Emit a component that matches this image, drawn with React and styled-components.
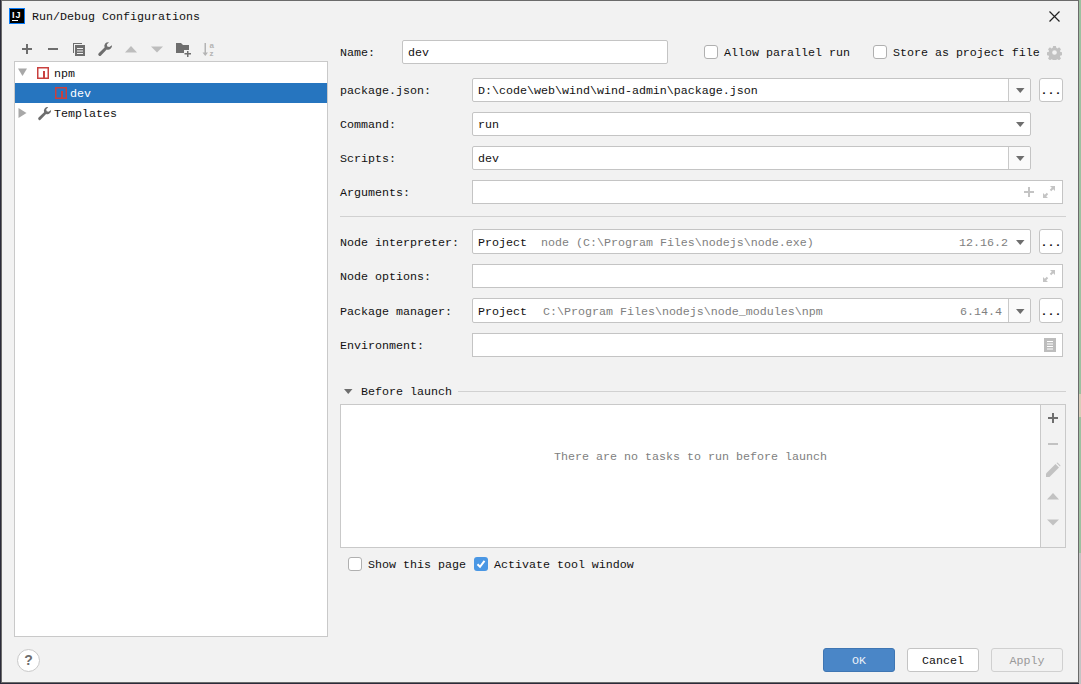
import React from "react";
import styled, { createGlobalStyle } from "styled-components";

const GlobalStyle = createGlobalStyle`
  html, body {
    margin: 0;
    padding: 0;
    background: #f2f2f2;
  }
  * {
    box-sizing: border-box;
  }
`;

const TriangleIcon = ({ dir = "down", color = "#6e6e6e", size = 16 }) => {
  const points = {
    down: "4,6 12.500,6 8.250,11",
    up: "4,11 12.500,11 8.250,6",
    downWide: "2,5.500 14,5.500 8,11.500",
    upWide: "2,11.500 14,11.500 8,5",
    downTall: "3,3.500 12,3.500 7.500,11",
    right: "3.500,3 3.500,13 11.500,8",
  };
  return (
    <svg width={size} height={size} viewBox="0 0 16 16">
      <polygon points={points[dir]} fill={color} />
    </svg>
  );
};

const PlusIcon = ({ color = "#6e6e6e" }) => (
  <svg width="16" height="16" viewBox="0 0 16 16">
    <path d="M3 7h4V3h2v4h4v2H9v4H7V9H3z" fill={color} />
  </svg>
);

const MinusIcon = ({ color = "#6e6e6e" }) => (
  <svg width="16" height="16" viewBox="0 0 16 16">
    <rect x="3" y="7" width="10" height="2" fill={color} />
  </svg>
);

const CopyIcon = () => (
  <svg width="16" height="16" viewBox="0 0 16 16">
    <path d="M2 2h9v1H3v9H2z" fill="#6e6e6e" />
    <path
      d="M4 4h10v11H4zM6 7v1h6V7zM6 9.500v1h6v-1zM6 12v1h6v-1z"
      fill="#6e6e6e"
      fillRule="evenodd"
    />
  </svg>
);

const WrenchIcon = ({ size = 16 }) => (
  <svg width={size} height={size} viewBox="0 0 16 16">
    <path
      d="M15 4.200a4 4 0 0 1-5.300 4.300L4 14.500a1.500 1.500 0 0 1-2.300-2.200l5.900-5.700A4 4 0 0 1 12 1.200L9.800 3.500l.5 2 2 .6z"
      fill="#6e6e6e"
    />
  </svg>
);

const FolderPlusIcon = () => (
  <svg width="16" height="16" viewBox="0 0 16 16">
    <path d="M1 2h5l2 2h6v5H9v3H1z" fill="#6e6e6e" />
    <path d="M12 10h1.500v2H16v1.500h-2.500V16H12v-2.500H9.500V12H12z" fill="#6e6e6e" />
  </svg>
);

const SortIcon = () => (
  <svg width="16" height="16" viewBox="0 0 16 16">
    <path d="M3.500 2H5v9.500h2L4.250 15 1.500 11.500h2z" fill="#b4b4b4" />
    <text
      x="8.500"
      y="7"
      fontSize="8"
      fontWeight="bold"
      fontFamily="Liberation Sans, sans-serif"
      fill="#b4b4b4"
    >
      a
    </text>
    <text
      x="8.500"
      y="15"
      fontSize="8"
      fontWeight="bold"
      fontFamily="Liberation Sans, sans-serif"
      fill="#b4b4b4"
    >
      z
    </text>
  </svg>
);

const NpmIcon = () => (
  <svg width="12" height="12" viewBox="0 0 12 12">
    <rect x="0.750" y="0.750" width="10.500" height="10.500" fill="#fff" stroke="#c9403e" strokeWidth="1.500" />
    <rect x="6" y="4" width="2" height="7" fill="#c9403e" />
  </svg>
);

const NpmSelectedIcon = () => (
  <svg width="12" height="12" viewBox="0 0 12 12">
    <rect x="0.750" y="0.750" width="10.500" height="10.500" fill="#2675bf" stroke="#c9403e" strokeWidth="1.500" />
    <rect x="6" y="4" width="2" height="7" fill="#c9403e" />
  </svg>
);

const GearIcon = () => (
  <svg width="15" height="15" viewBox="0 0 16 16">
    <path
      fillRule="evenodd"
      d="M6.500 1h3l.4 2 1.300.6 1.700-1.100 2 2.100-1.100 1.700.6 1.200 2 .4v3l-2 .4-.6 1.300 1.100 1.700-2 2-1.700-1.100-1.300.6-.4 2h-3l-.4-2-1.300-.6-1.700 1.100-2-2 1.100-1.700-.6-1.300-2-.4v-3l2-.4.6-1.200-1.100-1.700 2-2.100 1.700 1.100 1.300-.6zM8 5.500a2.500 2.500 0 1 0 0 5 2.500 2.500 0 0 0 0-5z"
      fill="#c2c2c2"
    />
  </svg>
);

const ExpandIcon = () => (
  <svg width="14" height="14" viewBox="0 0 14 14">
    <path d="M8 1h5v5l-1.800-1.800-2 2-1.400-1.400 2-2z" fill="#c4c4c4" />
    <path d="M6 13H1V8l1.800 1.800 2-2 1.400 1.400-2 2z" fill="#c4c4c4" />
  </svg>
);

const NoteIcon = () => (
  <svg width="12" height="14" viewBox="0 0 12 14">
    <path
      fillRule="evenodd"
      d="M0 0h12v14H0zM3 3v1h6V3zM3 5.500v1h6v-1zM3 8v1h6V8zM3 10.500v1h6v-1z"
      fill="#bdbdbd"
    />
  </svg>
);

const PencilIcon = () => (
  <svg width="16" height="16" viewBox="0 0 16 16">
    <path d="M1 15v-3.500L10.500 2l3.500 3.500L4.500 15z" fill="#c2c2c2" />
    <path d="M11.500 1l1-.5 3 3-.5 1z" fill="#c2c2c2" />
  </svg>
);

const CheckIcon = () => (
  <svg width="14" height="14" viewBox="0 0 14 14">
    <path d="M3.500 7.200l2.500 2.600 4.500-6" fill="none" stroke="#fff" strokeWidth="2" />
  </svg>
);

const CloseIcon = () => (
  <svg width="11" height="11" viewBox="0 0 11 11">
    <path d="M.5.500l10 10M10.500.500l-10 10" stroke="#222" strokeWidth="1.200" fill="none" />
  </svg>
);

const Backdrop = styled.div`
  width: 1081px;
  height: 684px;
  padding: 0 2px 1px 1px;
  overflow: hidden;
  font-family: "Liberation Mono", "Courier New", monospace;
  font-size: 11.67px;
  line-height: 15px;
  color: #111;
  background: linear-gradient(
      180deg,
      #9dc0a0 0,
      #9dc0a0 394px,
      #d8cdb8 394px,
      #d8cdb8 417px,
      #9dc0a0 417px,
      #9dc0a0 553px,
      #c4c4c4 553px
    )
    right top / 2px 100% no-repeat,
    #2b2b3a;
`;

const Window = styled.div`
  width: 100%;
  height: 100%;
  display: flex;
  flex-direction: column;
  background: #f2f2f2;
  border: 1px solid #6b6b6b;
`;

const TitleBar = styled.div`
  height: 30px;
  flex-shrink: 0;
  display: flex;
  align-items: center;
  padding: 0 18px 0 7px;
`;

const Logo = styled.div`
  width: 16px;
  height: 16px;
  margin-right: 7px;
  background: #000;
  border: 1px solid #087cfa;
  display: flex;
`;

// every text piece sits 1px below the centre of its row, hence the 2px on top
const TextLine = styled.span`
  padding-top: 2px;
  white-space: pre;
`;

const Title = styled(TextLine)`
  flex: 1;
`;

const Content = styled.div`
  flex: 1;
  min-height: 0;
  display: flex;
  gap: 12px;
  padding: 0 12px;
`;

const LeftPane = styled.div`
  width: 314px;
  display: flex;
  flex-direction: column;
`;

const Toolbar = styled.div`
  height: 30px;
  display: flex;
  align-items: center;
  gap: 10px;
  padding: 6px 0 0 5px;
`;

const ToolButton = styled.div`
  width: 16px;
  height: 16px;
  display: flex;
`;

const Tree = styled.div`
  flex: 1;
  padding-top: 1px;
  background: #fff;
  border: 1px solid #c9c9c9;
`;

const TreeRow = styled.div`
  height: 20px;
  display: flex;
  align-items: center;
  padding-left: ${(props) => props.$indent}px;
  background: ${(props) => (props.$selected ? "#2675bf" : "transparent")};
  color: ${(props) => (props.$selected ? "#fff" : "#111")};
`;

const TreeArrow = styled.div`
  width: 16px;
  height: 16px;
  margin-right: 6px;
  display: flex;
`;

const TreeIcon = styled.div`
  width: ${(props) => props.$width}px;
  margin-right: ${(props) => props.$gap}px;
  display: flex;
  align-items: center;
`;

const RightPane = styled.div`
  width: 726px;
  padding-top: 9px;
  display: flex;
  flex-direction: column;
`;

const Row = styled.div`
  height: ${(props) => props.$height || 24}px;
  margin-bottom: ${(props) => props.$gap || 10}px;
  display: flex;
  align-items: center;
  flex-shrink: 0;
`;

const Label = styled(TextLine)`
  width: ${(props) => props.$width || 132}px;
  padding-top: ${(props) => (props.$tall ? 4 : 2)}px;
  flex-shrink: 0;
`;

const Field = styled.div`
  width: ${(props) => props.$width}px;
  height: 100%;
  flex-shrink: 0;
  display: flex;
  align-items: center;
  padding-left: 5px;
  background: #fff;
  border: 1px solid #c4c4c4;
  border-radius: ${(props) => (props.$round ? "2px" : "0")};
`;

const FieldText = styled(TextLine)`
  flex: 1;
`;

const Muted = styled.span`
  color: #808080;
  margin-left: ${(props) => props.$gap || 0}px;
`;

const Version = styled.span`
  margin-left: auto;
  padding-right: ${(props) => props.$pad}px;
  color: #808080;
`;

const ComboInfo = styled.div`
  flex: 1;
  padding-top: 4px;
  display: flex;
  align-items: center;
  white-space: pre;
`;

const ArrowZone = styled.div`
  width: 22px;
  height: 100%;
  flex-shrink: 0;
  display: flex;
  align-items: center;
  justify-content: center;
  background: ${(props) => (props.$divided ? "#fafafa" : "transparent")};
  border-left: 1px solid ${(props) => (props.$divided ? "#c9c9c9" : "transparent")};
  border-radius: 0 2px 2px 0;
`;

const FieldIcons = styled.div`
  display: flex;
  align-items: center;
  gap: 7px;
  padding-right: 6px;
`;

const EllipsisButton = styled.button`
  width: 24px;
  height: 100%;
  margin-left: 8px;
  padding: 3px 0 0;
  flex-shrink: 0;
  background: #fff;
  border: 1px solid #c4c4c4;
  border-radius: 3px;
  font: inherit;
  font-weight: bold;
  color: #111;
`;

const CheckGroup = styled.div`
  display: flex;
  align-items: center;
  margin-left: ${(props) => props.$left}px;
`;

const CheckBox = styled.div`
  width: 14px;
  height: 14px;
  margin-right: 6px;
  flex-shrink: 0;
  display: flex;
  background: ${(props) => (props.$checked ? "#4a97e4" : "#fff")};
  border: ${(props) => (props.$checked ? "none" : "1px solid #b0b0b0")};
  border-radius: 3px;
`;

const Gear = styled.div`
  margin-left: 7px;
  display: flex;
`;

const Separator = styled.div`
  height: 1px;
  margin: 2px 0 12px;
  flex-shrink: 0;
  background: #d1d1d1;
`;

const SectionHeader = styled.div`
  height: 14px;
  margin-top: 17px;
  margin-bottom: 6px;
  display: flex;
  align-items: center;
  flex-shrink: 0;
`;

const SectionArrow = styled.div`
  width: 16px;
  height: 16px;
  margin-right: 5px;
  display: flex;
`;

const SectionLine = styled.div`
  flex: 1;
  height: 1px;
  margin-left: 6px;
  background: #d1d1d1;
`;

const TaskBox = styled.div`
  height: 144px;
  flex-shrink: 0;
  display: flex;
  border: 1px solid #c9c9c9;
`;

const TaskEmpty = styled.div`
  flex: 1;
  display: flex;
  align-items: center;
  justify-content: center;
  padding-bottom: 38px;
  background: #fff;
  color: #808080;
`;

const TaskTools = styled.div`
  width: 25px;
  flex-shrink: 0;
  display: flex;
  flex-direction: column;
  align-items: center;
  gap: 10px;
  padding-top: 5px;
  border-left: 1px solid #c9c9c9;
`;

const OptionsRow = styled.div`
  height: 14px;
  margin-top: 9px;
  padding-left: 8px;
  display: flex;
  align-items: center;
  flex-shrink: 0;
`;

const OptionText = styled(TextLine)`
  margin-right: ${(props) => props.$gap || 0}px;
`;

const Footer = styled.div`
  height: 45px;
  flex-shrink: 0;
  display: flex;
  align-items: flex-start;
  padding: 11px 15px 0 15px;
`;

const HelpButton = styled.div`
  width: 23px;
  height: 23px;
  margin-top: 1px;
  display: flex;
  align-items: center;
  justify-content: center;
  background: #fff;
  border: 1px solid #c9c9c9;
  border-radius: 50%;
  font-family: "Liberation Sans", sans-serif;
  font-size: 14px;
  font-weight: bold;
  color: #6e6e6e;
`;

const FooterButtons = styled.div`
  margin-left: auto;
  display: flex;
  gap: 12px;
`;

const DialogButton = styled.button`
  width: 72px;
  height: 24px;
  padding: 2px 0 0;
  font: inherit;
  border-radius: 3px;
  background: ${(props) =>
    props.$primary ? "#4a86c7" : props.disabled ? "#f2f2f2" : "#fff"};
  border: 1px solid
    ${(props) =>
      props.$primary ? "#3f76b3" : props.disabled ? "#d0d0d0" : "#c4c4c4"};
  color: ${(props) =>
    props.$primary ? "#eaf1f8" : props.disabled ? "#999" : "#111"};
`;

const toolbarIcons = [
  <PlusIcon />,
  <MinusIcon />,
  <CopyIcon />,
  <WrenchIcon />,
  <TriangleIcon dir="upWide" color="#bdbdbd" />,
  <TriangleIcon dir="downWide" color="#bdbdbd" />,
  <FolderPlusIcon />,
  <SortIcon />,
];

const App = () => {
  return (
    <>
      <GlobalStyle />
      <Backdrop>
        <Window>
          <TitleBar>
            <Logo>
              <svg width="14" height="14" viewBox="0 0 14 14">
                <text
                  x="2"
                  y="8.500"
                  fontSize="9"
                  fontWeight="bold"
                  fontFamily="Liberation Sans, sans-serif"
                  letterSpacing="1"
                  fill="#fff"
                >
                  IJ
                </text>
                <rect x="2" y="11" width="6" height="1" fill="#fff" />
              </svg>
            </Logo>
            <Title>Run/Debug Configurations</Title>
            <CloseIcon />
          </TitleBar>

          <Content>
            <LeftPane>
              <Toolbar>
                {toolbarIcons.map((icon, i) => (
                  <ToolButton key={i}>{icon}</ToolButton>
                ))}
              </Toolbar>
              <Tree>
                <TreeRow $indent={0}>
                  <TreeArrow>
                    <TriangleIcon dir="downTall" color="#a8a8a8" />
                  </TreeArrow>
                  <TreeIcon $width={12} $gap={5}>
                    <NpmIcon />
                  </TreeIcon>
                  <TextLine>npm</TextLine>
                </TreeRow>
                <TreeRow $indent={40} $selected>
                  <TreeIcon $width={12} $gap={3}>
                    <NpmSelectedIcon />
                  </TreeIcon>
                  <TextLine>dev</TextLine>
                </TreeRow>
                <TreeRow $indent={0}>
                  <TreeArrow>
                    <TriangleIcon dir="right" color="#a8a8a8" />
                  </TreeArrow>
                  <TreeIcon $width={15} $gap={2}>
                    <WrenchIcon size={15} />
                  </TreeIcon>
                  <TextLine>Templates</TextLine>
                </TreeRow>
              </Tree>
            </LeftPane>

            <RightPane>
              <Row $gap={14}>
                <Label $width={62}>Name:</Label>
                <Field $width={266} $round>
                  <FieldText>dev</FieldText>
                </Field>
                <CheckGroup $left={36}>
                  <CheckBox />
                  <TextLine>Allow parallel run</TextLine>
                </CheckGroup>
                <CheckGroup $left={23}>
                  <CheckBox />
                  <TextLine>Store as project file</TextLine>
                </CheckGroup>
                <Gear>
                  <GearIcon />
                </Gear>
              </Row>

              <Row>
                <Label>package.json:</Label>
                <Field $width={559} $round>
                  <FieldText>D:\code\web\wind\wind-admin\package.json</FieldText>
                  <ArrowZone $divided>
                    <TriangleIcon />
                  </ArrowZone>
                </Field>
                <EllipsisButton>...</EllipsisButton>
              </Row>

              <Row>
                <Label>Command:</Label>
                <Field $width={559} $round>
                  <FieldText>run</FieldText>
                  <ArrowZone>
                    <TriangleIcon />
                  </ArrowZone>
                </Field>
              </Row>

              <Row>
                <Label>Scripts:</Label>
                <Field $width={559} $round>
                  <FieldText>dev</FieldText>
                  <ArrowZone $divided>
                    <TriangleIcon />
                  </ArrowZone>
                </Field>
              </Row>

              <Row>
                <Label>Arguments:</Label>
                <Field $width={591}>
                  <FieldText />
                  <FieldIcons>
                    <svg width="12" height="12" viewBox="0 0 12 12">
                      <path d="M5 1h2v4h4v2H7v4H5V7H1V5h4z" fill="#c4c4c4" />
                    </svg>
                    <ExpandIcon />
                  </FieldIcons>
                </Field>
              </Row>

              <Separator />

              <Row $height={25}>
                <Label $tall>Node interpreter:</Label>
                <Field $width={559} $round>
                  <ComboInfo>
                    Project
                    <Muted $gap={14}>node (C:\Program Files\nodejs\node.exe)</Muted>
                    <Version $pad={0}>12.16.2</Version>
                  </ComboInfo>
                  <ArrowZone>
                    <TriangleIcon />
                  </ArrowZone>
                </Field>
                <EllipsisButton>...</EllipsisButton>
              </Row>

              <Row>
                <Label>Node options:</Label>
                <Field $width={591}>
                  <FieldText />
                  <FieldIcons>
                    <ExpandIcon />
                  </FieldIcons>
                </Field>
              </Row>

              <Row $height={25}>
                <Label $tall>Package manager:</Label>
                <Field $width={559} $round>
                  <ComboInfo>
                    Project
                    <Muted $gap={16}>C:\Program Files\nodejs\node_modules\npm</Muted>
                    <Version $pad={6}>6.14.4</Version>
                  </ComboInfo>
                  <ArrowZone $divided>
                    <TriangleIcon />
                  </ArrowZone>
                </Field>
                <EllipsisButton>...</EllipsisButton>
              </Row>

              <Row>
                <Label>Environment:</Label>
                <Field $width={591}>
                  <FieldText />
                  <FieldIcons>
                    <NoteIcon />
                  </FieldIcons>
                </Field>
              </Row>

              <SectionHeader>
                <SectionArrow>
                  <TriangleIcon />
                </SectionArrow>
                <TextLine>Before launch</TextLine>
                <SectionLine />
              </SectionHeader>

              <TaskBox>
                <TaskEmpty>There are no tasks to run before launch</TaskEmpty>
                <TaskTools>
                  <PlusIcon />
                  <MinusIcon color="#c2c2c2" />
                  <PencilIcon />
                  <TriangleIcon dir="upWide" color="#c2c2c2" />
                  <TriangleIcon dir="downWide" color="#c2c2c2" />
                </TaskTools>
              </TaskBox>

              <OptionsRow>
                <CheckBox />
                <OptionText $gap={8}>Show this page</OptionText>
                <CheckBox $checked>
                  <CheckIcon />
                </CheckBox>
                <OptionText>Activate tool window</OptionText>
              </OptionsRow>
            </RightPane>
          </Content>

          <Footer>
            <HelpButton>?</HelpButton>
            <FooterButtons>
              <DialogButton $primary>OK</DialogButton>
              <DialogButton>Cancel</DialogButton>
              <DialogButton disabled>Apply</DialogButton>
            </FooterButtons>
          </Footer>
        </Window>
      </Backdrop>
    </>
  );
};

export default App;
